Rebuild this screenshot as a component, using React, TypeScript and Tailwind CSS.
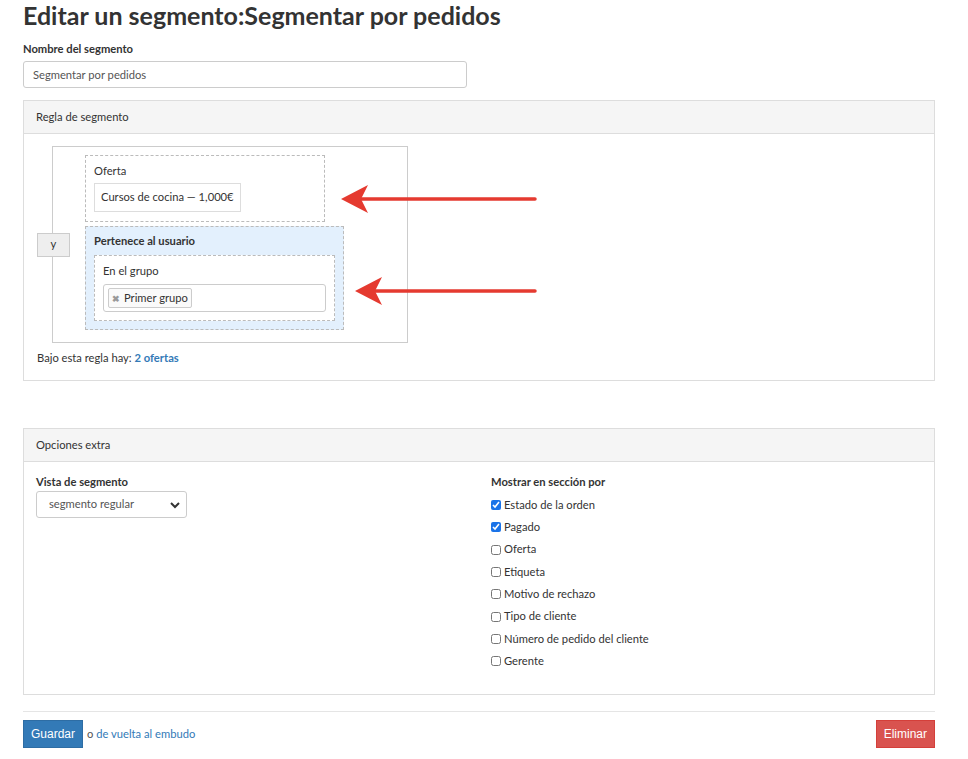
import React from 'react';

const font = { fontFamily: 'Lato, "Liberation Sans", sans-serif' };

const sectionOptions = [
  { label: 'Estado de la orden', checked: true },
  { label: 'Pagado', checked: true },
  { label: 'Oferta', checked: false },
  { label: 'Etiqueta', checked: false },
  { label: 'Motivo de rechazo', checked: false },
  { label: 'Tipo de cliente', checked: false },
  { label: 'Número de pedido del cliente', checked: false },
  { label: 'Gerente', checked: false },
];

function Arrow({ className, width }: { className: string; width: number }) {
  return (
    <svg className={className} width={width} height="30" viewBox={`0 0 ${width} 30`}>
      <line x1="20" y1="15" x2={width - 2} y2="15" stroke="#e53a30" strokeWidth="3.5" strokeLinecap="round" />
      <path d="M0 15 L27 1 L20 15 L27 29 Z" fill="#e53a30" />
    </svg>
  );
}

export default function App() {
  return (
    <div className="min-h-screen bg-white text-[#333] text-[11.2px] pl-[23px] pr-[33px] pb-3" style={font}>
      <h1 className="text-[25px] font-bold leading-[26px] pt-[2px] text-[#333]">Editar un segmento:Segmentar por pedidos</h1>

      {/* Nombre */}
      <div className="mt-[13px]">
        <label className="block font-bold leading-[15px] text-[#333]">Nombre del segmento</label>
        <input
          className="mt-[5px] w-[444px] h-[27px] border border-[#ccc] rounded-[3px] px-[9px] text-[11.2px] text-[#555] outline-none"
          style={font}
          defaultValue="Segmentar por pedidos"
        />
      </div>

      {/* Regla de segmento */}
      <div className="mt-[12px] border border-[#ddd]">
        <div className="h-[33px] bg-[#f5f5f5] border-b border-[#ddd] px-[12px] flex items-center text-[#333]">Regla de segmento</div>
        <div className="relative px-[13px] pt-[12px] pb-[15px]">
          <div className="flex items-center">
            <div className="w-[33px] h-[24px] bg-[#eee] border border-[#ccc] flex items-center justify-center z-10">y</div>
            <div className="-ml-[18px] w-[356px] border border-[#ccc] pl-[32px] pt-[8px] pb-[12px]">
              <div className="w-[240px] border border-dashed border-[#bbb] px-[8px] pt-[8px] pb-[9px]">
                <div className="leading-[14px]">Oferta</div>
                <div className="mt-[5px] inline-flex h-[29px] items-center border border-[#ddd] px-[6px]">Cursos de cocina — 1,000€</div>
              </div>
              <div className="mt-[4px] w-[259px] bg-[#e3f0fd] border border-dashed border-[#bbb] px-[8px] pt-[7px] pb-[8px]">
                <div className="font-bold leading-[14px]">Pertenece al usuario</div>
                <div className="mt-[7px] border border-dashed border-[#bbb] bg-white px-[8px] pt-[8px] pb-[8px]">
                  <div className="leading-[14px]">En el grupo</div>
                  <div className="mt-[6px] h-[28px] border border-[#ccc] rounded-[3px] px-[4px] flex items-center">
                    <span className="inline-flex items-center gap-[4px] h-[20px] border border-[#ccc] rounded-[2px] bg-[#fafafa] px-[3px]">
                      <span className="text-[#999] text-[9px] font-bold leading-none">✖</span>
                      <span>Primer grupo</span>
                    </span>
                  </div>
                </div>
              </div>
            </div>
          </div>
          <div className="mt-[7px] leading-[15px]">
            Bajo esta regla hay: <a className="font-bold text-[#337ab7]">2 ofertas</a>
          </div>
          <Arrow className="absolute left-[317px] top-[50px]" width={196} />
          <Arrow className="absolute left-[331px] top-[142px]" width={182} />
        </div>
      </div>

      {/* Opciones extra */}
      <div className="mt-[47px] border border-[#ddd]">
        <div className="h-[33px] bg-[#f5f5f5] border-b border-[#ddd] px-[12px] flex items-center text-[#333]">Opciones extra</div>
        <div className="grid grid-cols-2 px-[12px] pt-[12px] pb-[22px]">
          <div>
            <div className="font-bold leading-[15px]">Vista de segmento</div>
            <div className="relative mt-[2px] w-[151px] h-[27px] border border-[#ccc] rounded-[3px] flex items-center pl-[12px] text-[#555]">
              segmento regular
              <svg className="absolute right-[6px] top-[9px]" width="10" height="8" viewBox="0 0 10 8">
                <path d="M1 2 L5 6 L9 2" fill="none" stroke="#333" strokeWidth="2" />
              </svg>
            </div>
          </div>
          <div className="pl-[12px]">
            <div className="font-bold leading-[15px]">Mostrar en sección por</div>
            <div className="mt-[5px] flex flex-col">
              {sectionOptions.map((opt) => (
                <label key={opt.label} className="flex items-center h-[22.3px]">
                  <input type="checkbox" defaultChecked={opt.checked} className="m-0 w-[10px] h-[10px] accent-[#1a73e8]" />
                  <span className="ml-[3px]">{opt.label}</span>
                </label>
              ))}
            </div>
          </div>
        </div>
      </div>

      {/* Footer */}
      <div className="mt-[16px] border-t border-[#e5e5e5] pt-[8px] flex items-center justify-between">
        <div className="flex items-center">
          <button className="h-[28px] px-[7px] bg-[#337ab7] border border-[#2e6da4] text-white text-[12px]" style={{ fontFamily: '"Liberation Sans", sans-serif' }}>Guardar</button>
          <span className="ml-[4px] text-[#555]">o <a className="text-[#337ab7]">de vuelta al embudo</a></span>
        </div>
        <button className="h-[28px] px-[7px] bg-[#d9534f] border border-[#d43f3a] text-white text-[12px]" style={{ fontFamily: '"Liberation Sans", sans-serif' }}>Eliminar</button>
      </div>
    </div>
  );
}
